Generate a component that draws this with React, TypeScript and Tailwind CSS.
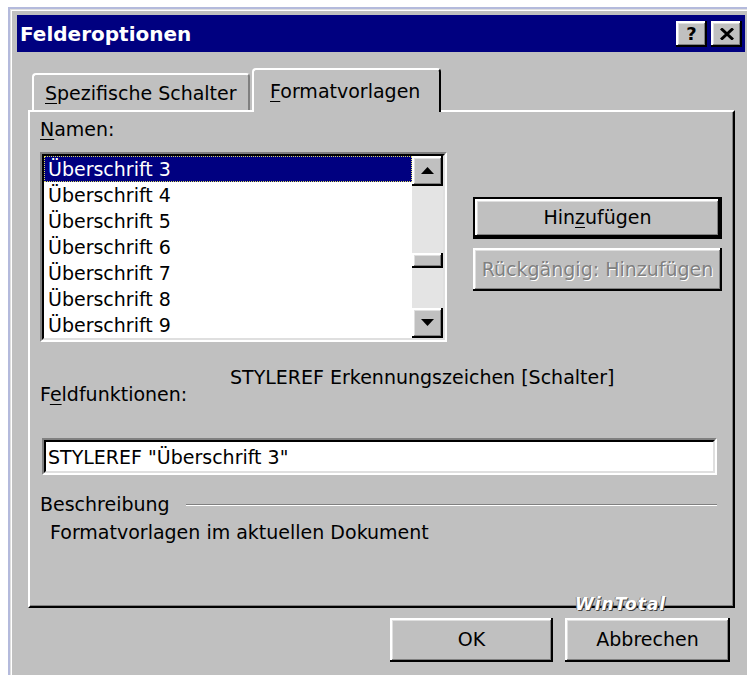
import React from 'react';

// classic 3D bevels
const raised =
  'bg-[#c0c0c0] shadow-[inset_-2px_-2px_0_#000,inset_2px_2px_0_#fff,inset_-3px_-3px_0_#808080,inset_3px_3px_0_#dfdfdf]';

function Sunken({ className, children }: { className?: string; children?: React.ReactNode }) {
  return (
    <div className={`border-2 border-t-[#808080] border-l-[#808080] border-r-white border-b-white ${className ?? ''}`}>
      <div className="h-full w-full border-2 border-t-black border-l-black border-r-[#dfdfdf] border-b-[#dfdfdf] bg-white">
        {children}
      </div>
    </div>
  );
}

function Arrow({ down }: { down?: boolean }) {
  return (
    <svg width="13" height="8" viewBox="0 0 13 8">
      <path d={down ? 'M0 0h13L6.5 7z' : 'M6.5 0L13 7H0z'} fill="#000" />
    </svg>
  );
}

const names = [3, 4, 5, 6, 7, 8, 9];

export default function App() {
  return (
    <div className="w-[747px] h-[675px] overflow-hidden bg-white font-['DejaVu_Sans',sans-serif] text-[19px] leading-[22px] text-black">
      <div className="ml-[8px] mt-[7px] h-[668px] border-l-2 border-t-2 border-[#b4badc]">
        <div className="relative h-full bg-[#c0c0c0] pl-[7px] pr-[2px] pt-[4px] shadow-[inset_1px_1px_0_#dfdfdf,inset_2px_2px_0_#fff]">
          {/* title bar */}
          <div className="mt-[2px] flex h-[37px] items-center bg-[#000080] pl-[3px] pr-[3px]">
            <span className="text-[20px] font-bold text-white">Felderoptionen</span>
            <div className="ml-auto flex gap-[4px]">
              <div className={`${raised} flex h-[26px] w-[31px] items-center justify-center text-[18px] font-bold leading-none`}>?</div>
              <div className={`${raised} flex h-[26px] w-[31px] items-center justify-center`}>
                <svg width="14" height="12" viewBox="0 0 14 12">
                  <path d="M1 0.5L13 11.5M13 0.5L1 11.5" stroke="#000" strokeWidth="3" />
                </svg>
              </div>
            </div>
          </div>

          {/* tabs */}
          <div className="ml-[15px] mt-[16px] flex h-[42px] items-end">
            <div className="flex h-[37px] w-[218px] items-center rounded-t-[4px] border-l-2 border-t-2 border-r-2 border-l-white border-t-white border-r-[#808080] pl-[11px]">
              <span><u className="underline-offset-[3px]">S</u>pezifische Schalter</span>
            </div>
            <div className="relative z-10 -mb-[2px] ml-[2px] flex h-[44px] w-[189px] items-center rounded-t-[4px] border-l-2 border-t-2 border-r-2 border-l-white border-t-white border-r-black bg-[#c0c0c0] pl-[16px]">
              <span><u className="underline-offset-[3px]">F</u>ormatvorlagen</span>
            </div>
          </div>

          {/* tab page */}
          <div className="ml-[11px] h-[498px] w-[707px] border-2 border-t-white border-l-white border-r-black border-b-black pl-[10px] pt-[6px] shadow-[inset_-1px_-1px_0_#808080]">
            <div>
              <u className="underline-offset-[3px]">N</u>amen:
            </div>

            <div className="mt-[12px] flex items-start">
              <Sunken className="h-[190px] w-[407px]">
                <div className="flex h-full">
                  <div className="flex-1">
                    {names.map((n, i) => (
                      <div
                        key={n}
                        className={
                          i === 0
                            ? 'h-[26px] border border-dotted border-[#d8d860] bg-[#000080] pl-[3px] leading-[24px] text-white'
                            : 'h-[26px] pl-[4px] leading-[26px]'
                        }
                      >
                        Überschrift {n}
                      </div>
                    ))}
                  </div>
                  <div className="flex w-[31px] flex-col bg-[#e4e4e4]">
                    <div className={`${raised} flex h-[30px] items-center justify-center`}>
                      <Arrow />
                    </div>
                    <div className="flex-1">
                      <div className={`${raised} mt-[67px] h-[15px]`} />
                    </div>
                    <div className={`${raised} flex h-[30px] items-center justify-center`}>
                      <Arrow down />
                    </div>
                  </div>
                </div>
              </Sunken>

              <div className="ml-[26px] mt-[45px] flex w-[249px] flex-col gap-[9px]">
                <div className="h-[42px] border-2 border-black">
                  <div className={`${raised} flex h-full items-center justify-center pb-[2px]`}>
                    <span>Hin<u className="underline-offset-[3px]">z</u>ufügen</span>
                  </div>
                </div>
                <div className={`${raised} flex h-[43px] items-center justify-center pb-[2px] text-[#808080] [text-shadow:1px_1px_0_#fff]`}>
                  Rückgängig: Hinzufügen
                </div>
              </div>
            </div>

            <div className="mt-[24px] flex">
              <div className="w-[190px] pt-[17px]">
                F<u className="underline-offset-[3px]">e</u>ldfunktionen:
              </div>
              <div>STYLEREF Erkennungszeichen [Schalter]</div>
            </div>

            <Sunken className="ml-[2px] mt-[33px] h-[37px] w-[675px]">
              <div className="pl-[2px] pt-[4px]">STYLEREF "Überschrift 3"</div>
            </Sunken>

            <div className="mt-[18px] flex w-[677px] items-center">
              <span>Beschreibung</span>
              <div className="ml-[16px] mt-[2px] flex-1 border-t border-b border-t-[#808080] border-b-white" />
            </div>
            <div className="mt-[6px] pl-[10px]">Formatvorlagen im aktuellen Dokument</div>
          </div>

          {/* dialog buttons */}
          <div className="mt-[10px] flex justify-end gap-[12px] pr-[15px]">
            <div className={`${raised} flex h-[44px] w-[163px] items-center justify-center pb-[2px]`}>OK</div>
            <div className={`${raised} flex h-[44px] w-[165px] items-center justify-center pb-[2px]`}>Abbrechen</div>
          </div>

          <span className="absolute left-[565px] top-[584px] text-[17px] font-bold italic tracking-[1px] text-white [text-shadow:1px_1px_0_#444,-1px_0_0_#888]">
            WinTotal
          </span>
        </div>
      </div>
    </div>
  );
}
